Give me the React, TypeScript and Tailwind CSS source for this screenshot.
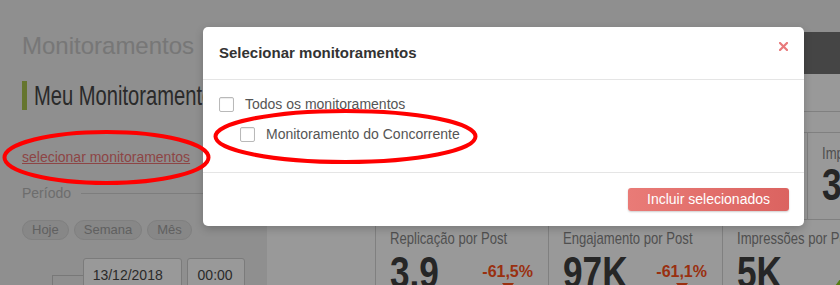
import { Fragment } from 'react'

type TopCard = { title: string; value: string }
type PostCard = { title: string; value: string; delta: string; up: boolean; width: string }

const TOP_CARDS: TopCard[] = [
  { title: 'Replicações', value: '10' },
  { title: 'Engajamento', value: '2,5M' },
  { title: 'Impressões', value: '312K' },
]

const POST_CARDS: PostCard[] = [
  { title: 'Replicação por Post', value: '3.9', delta: '-61,5%', up: false, width: 'w-[173px]' },
  { title: 'Engajamento por Post', value: '97K', delta: '-61,1%', up: false, width: 'w-[174px]' },
  { title: 'Impressões por Post', value: '5K', delta: '+4,2%', up: true, width: 'w-[174px]' },
]

const OPTIONS = [
  { label: 'Todos os monitoramentos', indent: false },
  { label: 'Monitoramento do Concorrente', indent: true },
]

// fonte condensada (nao ha Narrow instalada): Liberation Sans comprimida
const cardTitle = 'inline-block origin-left scale-x-[0.77] text-[17px] leading-[18px] text-[#868686]'
const cardValue = 'inline-block origin-left scale-x-[0.8] font-bold text-[44px] leading-[44px] text-[#404040]'

const Checkbox = () => (
  <span className="w-[15px] h-[15px] border border-[#b9b9b9] rounded-[2px] bg-white shadow-[inset_0_1px_1px_rgba(0,0,0,0.08)] shrink-0" />
)

const App = () => {
  return (
    <div className="relative w-[840px] h-[285px] overflow-hidden bg-[#eeeeee] font-['Liberation_Sans',Arial,sans-serif]">
      {/* pagina */}
      <div className="flex h-full">
        <aside className="w-[267px] shrink-0 px-[22px] pt-[32px] flex flex-col">
          <h1 className="text-[24px] leading-[28px] text-[#c6c6c6]">Monitoramentos</h1>
          <div className="mt-[21px] flex items-center gap-[7px] whitespace-nowrap">
            <span className="w-[5px] h-[29px] bg-[#a8c44e] shrink-0" />
            <span className="inline-block origin-left scale-x-[0.72] text-[28px] leading-[29px] text-[#464646]">
              Meu Monitoramento
            </span>
          </div>
          <a href="#" className="mt-[37px] text-[14px] leading-[20px] text-[#ec7474] underline">
            selecionar monitoramentos
          </a>
          <div className="mt-[16px] flex items-center gap-[10px]">
            <span className="text-[14px] leading-[20px] text-[#b6b6b6]">Período</span>
            <span className="flex-1 h-px bg-[#d0d0d0] mr-[-40px]" />
          </div>
          <div className="mt-[17px] flex gap-[5px]">
            {['Hoje', 'Semana', 'Mês'].map((p) => (
              <span
                key={p}
                className="h-[20px] px-[9px] rounded-full border border-[#d5d5d5] bg-[#e1e1e1] text-[13px] leading-[18px] text-[#a0a0a0]"
              >
                {p}
              </span>
            ))}
          </div>
          <div className="mt-[18px] flex ml-[30px]">
            <span className="w-[31px] h-[20px] mt-[17px] border-l border-t border-[#c8c8c8]" />
            <span className="w-[100px] h-[34px] border border-[#cdcdcd] rounded-[3px] bg-white pl-[9px] flex items-center text-[14px] text-[#484848]">
              13/12/2018
            </span>
            <span className="ml-[5px] w-[59px] h-[34px] border border-[#cdcdcd] rounded-[3px] bg-white pl-[10px] flex items-center text-[14px] text-[#484848]">
              00:00
            </span>
          </div>
        </aside>

        <main className="flex-1 flex flex-col">
          <div className="h-[32px] shrink-0" />
          <div className="h-[42px] shrink-0 bg-[#737373]" />
          <div className="flex-1 bg-white">
            <div className="h-[38px] border-b border-[#d5d5d5]" />
            <div className="pl-[108px] pt-[20px] flex whitespace-nowrap">
              {TOP_CARDS.map((c, i) => (
                <div
                  key={c.title}
                  className={`w-[216px] h-[88px] shrink-0 border-y border-l border-[#d5d5d5] pl-[14px] pt-[12px] ${i === TOP_CARDS.length - 1 ? 'border-r' : ''}`}
                >
                  <div className="flex">
                    <span className={cardTitle}>{c.title}</span>
                  </div>
                  <div className="flex">
                    <span className={cardValue}>{c.value}</span>
                  </div>
                </div>
              ))}
            </div>
            <div className="pl-[108px] mt-[6px] flex whitespace-nowrap">
              {POST_CARDS.map((c) => (
                <div key={c.title} className={`${c.width} h-[70px] shrink-0 border-l border-[#d5d5d5] pl-[14px] pr-[15px] pt-[4px]`}>
                  <div className="flex">
                    <span className={cardTitle}>{c.title}</span>
                  </div>
                  <div className="mt-[3px] flex items-start">
                    <span className={cardValue}>{c.value}</span>
                    {c.up ? (
                      <div className="ml-auto mt-[27px] flex flex-col items-start">
                        <span className="w-0 h-0 border-x-[6px] border-x-transparent border-b-[8px] border-b-[#8fd11f]" />
                        <span className="mt-[3px] text-[16px] leading-[16px] font-bold text-[#8fd11f]">{c.delta}</span>
                      </div>
                    ) : (
                      <div className="ml-auto mt-[13px] flex flex-col items-center">
                        <span className="text-[16px] leading-[16px] font-bold text-[#ff501a]">{c.delta}</span>
                        <span className="mt-[3px] w-0 h-0 border-x-[6px] border-x-transparent border-t-[8px] border-t-[#ff501a]" />
                      </div>
                    )}
                  </div>
                </div>
              ))}
            </div>
          </div>
        </main>
      </div>

      {/* fundo do modal */}
      <div className="absolute inset-0 bg-black/40" />

      {/* modal */}
      <div className="absolute left-[203px] top-[27px] w-[601px] bg-white rounded-[5px] shadow-[0_3px_9px_rgba(0,0,0,0.2)]">
        <div className="h-[53px] border-b border-[#e5e5e5] pl-[16px] pr-[16px] flex items-center justify-between">
          <h2 className="text-[15px] font-bold text-[#333333]">Selecionar monitoramentos</h2>
          <button className="self-start mt-[15px] w-[9px] h-[9px]" aria-label="Fechar">
            <svg viewBox="0 0 9 9" className="w-[9px] h-[9px]" aria-hidden="true">
              <path d="M1 1L8 8M8 1L1 8" stroke="#e8797b" strokeWidth="2.2" strokeLinecap="square" />
            </svg>
          </button>
        </div>
        <div className="pl-[16px] pt-[9px] pb-[23px] border-b border-[#e5e5e5]">
          {OPTIONS.map((o) => (
            <Fragment key={o.label}>
              <label className={`h-[30px] flex items-center gap-[11px] ${o.indent ? 'pl-[21px]' : ''}`}>
                <Checkbox />
                <span className="text-[14px] text-[#555555]">{o.label}</span>
              </label>
            </Fragment>
          ))}
        </div>
        <div className="py-[15px] pr-[15px] flex justify-end">
          <button className="h-[23px] px-[19px] rounded-[3px] bg-gradient-to-r from-[#e97b77] to-[#db6360] text-white text-[14px] leading-[23px] shadow-[0_1px_2px_rgba(0,0,0,0.2)]">
            Incluir selecionados
          </button>
        </div>
      </div>

      {/* marcacoes em vermelho */}
      <svg className="absolute inset-0 pointer-events-none" width="840" height="285" viewBox="0 0 840 285" aria-hidden="true">
        <ellipse cx="106.5" cy="157.5" rx="102" ry="25.5" fill="none" stroke="#ff0000" strokeWidth="4" />
        <ellipse cx="345.5" cy="136.5" rx="130" ry="25.5" fill="none" stroke="#ff0000" strokeWidth="4" />
      </svg>
    </div>
  )
}

export default App
